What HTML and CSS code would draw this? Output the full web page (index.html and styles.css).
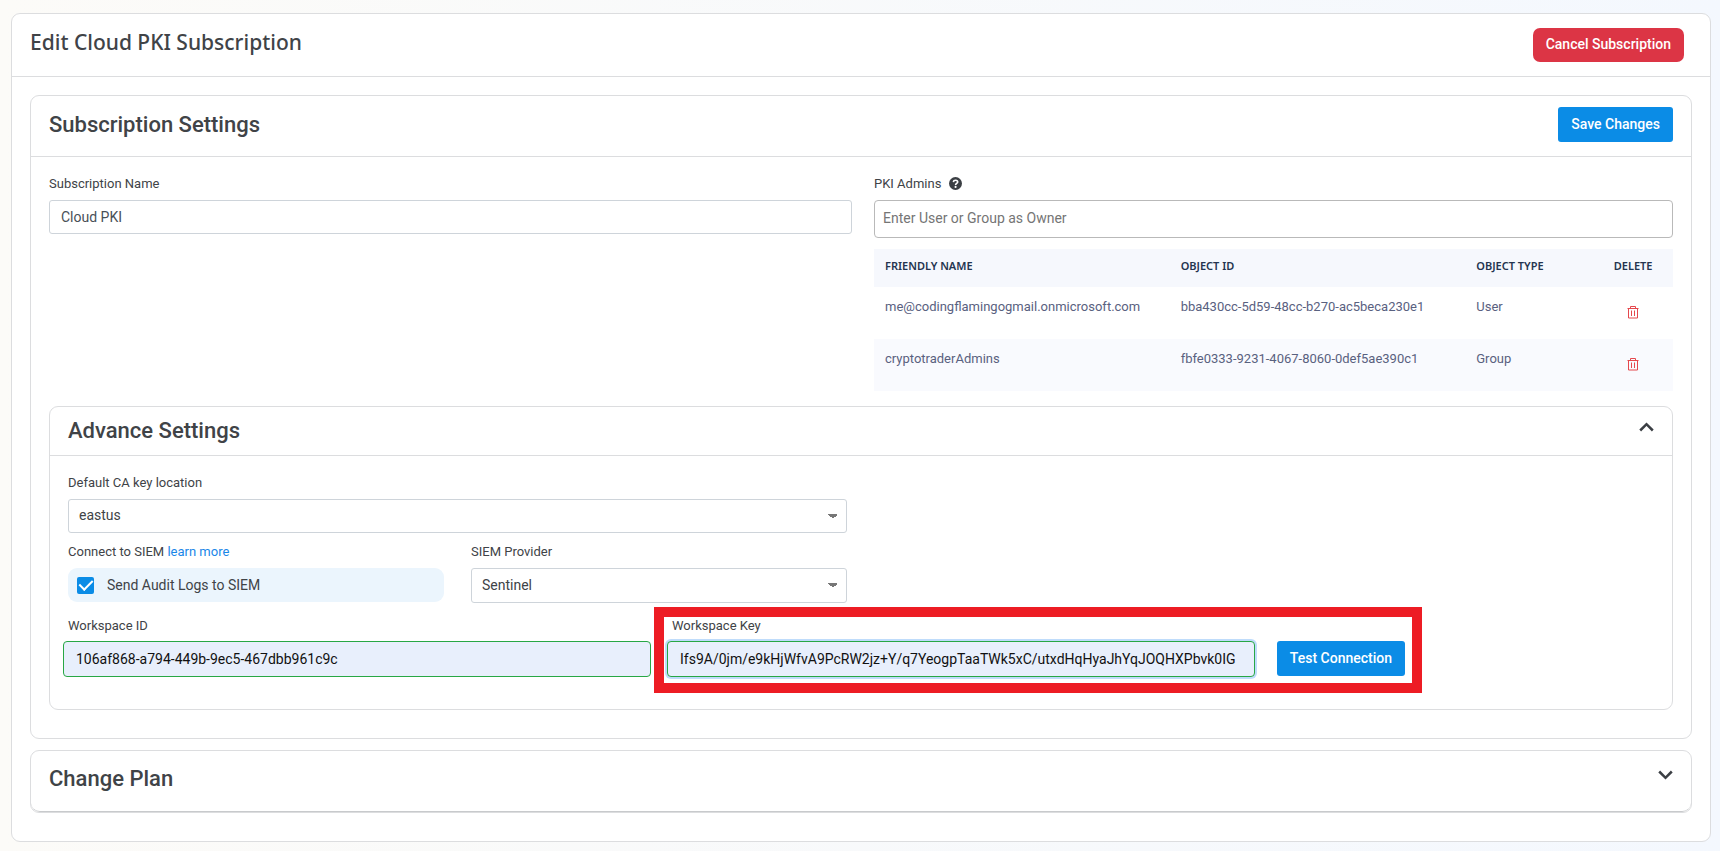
FILE: index.html
```html
<!DOCTYPE html>
<html lang="en">
<head>
<meta charset="utf-8">
<title>Edit Cloud PKI Subscription</title>
<link rel="stylesheet" href="styles.css">
</head>
<body>
<main class="card page-card">
  <header class="page-header">
    <h1 class="page-title">Edit Cloud PKI Subscription</h1>
    <button type="button" class="btn btn-danger">Cancel Subscription</button>
  </header>
  <div class="page-body">
    <section class="card">
      <header class="section-header">
        <h2 class="section-title">Subscription Settings</h2>
        <button type="button" class="btn btn-primary">Save Changes</button>
      </header>
      <div class="section-body">
        <div class="settings-grid">
          <div class="field">
            <label class="label" for="sub-name">Subscription Name</label>
            <input class="control" id="sub-name" type="text" value="Cloud PKI">
          </div>
          <div class="field">
            <label class="label" for="admins">PKI Admins
              <svg class="help" viewBox="0 0 16 16" width="13" height="13" aria-hidden="true"><circle cx="8" cy="8" r="8" fill="#3b3f44"/><path d="M5.3 6.200C5.500 4.700 6.500 4 8 4C9.600 4 10.700 4.900 10.700 6.200C10.700 7.900 8.100 7.900 8.100 9.800" fill="none" stroke="#fff" stroke-width="2"/><circle cx="8.100" cy="12.200" r="1.300" fill="#fff"/></svg>
            </label>
            <input class="control control-picker" id="admins" type="text" placeholder="Enter User or Group as Owner">
            <table class="admins">
              <thead>
                <tr><th class="col-name">Friendly Name</th><th class="col-id">Object ID</th><th>Object Type</th><th class="col-delete">Delete</th></tr>
              </thead>
              <tbody>
                <tr>
                  <td>me@codingflamingogmail.onmicrosoft.com</td><td>bba430cc-5d59-48cc-b270-ac5beca230e1</td><td>User</td>
                  <td class="col-delete"><button type="button" class="icon-btn" aria-label="Delete user"><svg viewBox="0 0 12 14" width="12" height="14" fill="none" stroke="#e5484d"><path d="M.5 3.500h11M3.500 3V1.500h5V3M1.500 3.500v9.500h9V3.500M4.500 5.500v5.500M7.500 5.500v5.500"/></svg></button></td>
                </tr>
                <tr>
                  <td>cryptotraderAdmins</td><td>fbfe0333-9231-4067-8060-0def5ae390c1</td><td>Group</td>
                  <td class="col-delete"><button type="button" class="icon-btn" aria-label="Delete group"><svg viewBox="0 0 12 14" width="12" height="14" fill="none" stroke="#e5484d"><path d="M.5 3.500h11M3.500 3V1.500h5V3M1.500 3.500v9.500h9V3.500M4.500 5.500v5.500M7.500 5.500v5.500"/></svg></button></td>
                </tr>
              </tbody>
            </table>
          </div>
        </div>

        <section class="card advance">
          <header class="advance-header">
            <h2 class="section-title">Advance Settings</h2>
            <button type="button" class="icon-btn toggle" aria-label="Collapse advance settings"><svg viewBox="0 0 15 10" width="15" height="10" fill="none" stroke="#3b3f44" stroke-width="2.500"><path d="M1.200 8.500 7.500 2.200l6.300 6.300"/></svg></button>
          </header>
          <div class="advance-grid">
            <div class="field">
              <label class="label" for="location">Default CA key location</label>
              <select class="control select" id="location"><option>eastus</option></select>
            </div>
          </div>
          <div class="advance-grid">
            <div class="siem-grid">
              <div class="field">
                <p class="label">Connect to SIEM <a class="link" href="#">learn more</a></p>
                <label class="check"><input class="check-input" type="checkbox" checked>Send Audit Logs to SIEM</label>
              </div>
              <div class="field">
                <label class="label" for="provider">SIEM Provider</label>
                <select class="control select select-tall" id="provider"><option>Sentinel</option></select>
              </div>
            </div>
          </div>
          <div class="workspace">
            <div class="field">
              <label class="label label-inset" for="ws-id">Workspace ID</label>
              <input class="control control-valid" id="ws-id" type="text" value="106af868-a794-449b-9ec5-467dbb961c9c">
            </div>
            <div class="key-group">
              <div class="field key-field">
                <label class="label label-inset" for="ws-key">Workspace Key</label>
                <input class="control control-valid control-active" id="ws-key" type="text" value="Ifs9A/0jm/e9kHjWfvA9PcRW2jz+Y/q7YeogpTaaTWk5xC/utxdHqHyaJhYqJOQHXPbvk0IG">
              </div>
              <button type="button" class="btn btn-primary btn-test">Test Connection</button>
            </div>
          </div>
        </section>
      </div>
    </section>

    <section class="card">
      <header class="section-header plan-header">
        <h2 class="section-title">Change Plan</h2>
        <button type="button" class="icon-btn toggle" aria-label="Expand change plan"><svg viewBox="0 0 15 10" width="15" height="10" fill="none" stroke="#3b3f44" stroke-width="2.500"><path d="M1.200 1.500 7.500 7.800l6.300-6.300"/></svg></button>
      </header>
    </section>
  </div>
</main>
</body>
</html>
```
FILE: styles.css
```css
* {
  box-sizing: border-box;
}

body {
  margin: 0;
  padding: 13px 9px 8px 11px;
  min-height: 100vh;
  background: linear-gradient(90deg, #fcfbf8, #f4f8fe);
  color: #404347;
  font: 14px/20px Roboto, sans-serif;
}

.card {
  background: #fff;
  border: 1px solid #dcdddf;
  border-radius: 9px;
}

.page-header,
.section-header,
.advance-header {
  display: flex;
  justify-content: space-between;
  align-items: center;
  border-bottom: 1px solid #dcdddf;
}

.page-header {
  padding: 14px 26px 14px 18px;
}

.page-title {
  margin: 0 0 6px;
  font: 500 21px/28px "Noto Sans", sans-serif;
}

.page-body {
  display: grid;
  gap: 11px;
  padding: 18px 18px 28px;
}

.section-header {
  padding: 11px 18px 14px;
}

.section-title {
  margin: 0;
  font-size: 22px;
  font-weight: 500;
  line-height: 28px;
}

.section-body {
  padding: 17px 18px 28px;
}

.settings-grid {
  display: grid;
  grid-template-columns: 803fr 799fr;
  gap: 22px;
}

.field {
  min-width: 0;
}

.label {
  display: block;
  margin: 0 0 6px;
  font-size: 13px;
}

.help {
  margin-left: 4px;
  vertical-align: -2px;
}

.control {
  display: block;
  width: 100%;
  height: 34px;
  padding: 0 11px;
  border: 1px solid #ced4da;
  border-radius: 3px;
  background: #fff;
  color: #495057;
  font: 14px/20px Roboto, sans-serif;
  outline: none;
}

.control-picker {
  height: 38px;
  padding: 0 8px 2px;
  border-color: #b9b9b9;
  border-radius: 4px;
}

.control-picker::placeholder {
  color: #757575;
}

.select {
  appearance: none;
  padding: 0 10px 2px;
  color: #404347;
  background-image:
    linear-gradient(45deg, transparent 50%, #777 50%),
    linear-gradient(135deg, #777 50%, transparent 50%);
  background-position: right 13px center, right 8px center;
  background-size: 5px 5px;
  background-repeat: no-repeat;
}

.select-tall {
  height: 35px;
}

.btn {
  border: 0;
  border-radius: 3px;
  color: #fff;
  font: 500 14px/20px Roboto, sans-serif;
}

.btn-danger {
  padding: 6px 13px 8px;
  border-radius: 7px;
  background: #dc3545;
}

.btn-primary {
  height: 35px;
  padding: 0 13px 2px;
  background: #0b8ce6;
}

.icon-btn {
  display: inline-flex;
  padding: 0;
  border: 0;
  background: none;
}

.toggle {
  margin-bottom: 8px;
}

.admins {
  width: 100%;
  margin-top: 11px;
  border-spacing: 0;
  table-layout: fixed;
  color: #59617f;
  font-size: 13px;
}

.admins th {
  height: 38px;
  padding: 0 0 4px 11px;
  background: #f6f8fd;
  color: #24344f;
  font: 600 11px/20px "Noto Sans", sans-serif;
  text-align: left;
  text-transform: uppercase;
}

.admins td {
  height: 52px;
  padding: 10px 0 0 11px;
  vertical-align: top;
}

.admins tbody tr:nth-child(even) td {
  background: #f9fafe;
}

.col-name,
.col-id {
  width: 37%;
}

.col-delete {
  width: 10%;
}

.admins .col-delete {
  padding-left: 0;
  padding-right: 0;
  text-align: center;
}

.admins td.col-delete {
  padding-top: 18px;
}

.advance {
  margin-top: 15px;
  padding-bottom: 32px;
}

.advance-header {
  margin-bottom: 17px;
  padding: 10px 18px;
}

.advance-grid {
  display: grid;
  grid-template-columns: 1fr 1fr;
  gap: 28px;
  padding: 0 18px;
  margin-bottom: 9px;
}

.siem-grid {
  display: grid;
  grid-template-columns: 1fr 1fr;
  gap: 27px;
}

.link {
  color: #1a86e8;
  text-decoration: none;
}

.check {
  display: flex;
  align-items: center;
  gap: 13px;
  height: 34px;
  padding: 0 9px;
  border-radius: 9px;
  background: #ebf5fd;
}

.check-input {
  display: grid;
  place-items: center;
  appearance: none;
  width: 17px;
  height: 17px;
  margin: 0;
  border-radius: 2px;
  background: #0b8ce6;
}

.check-input:checked::after {
  content: "";
  width: 6px;
  height: 11px;
  margin-bottom: 3px;
  border: solid #fff;
  border-width: 0 2px 2px 0;
  transform: rotate(45deg);
}

.workspace {
  display: grid;
  grid-template-columns: 588fr 738fr 251fr;
  gap: 16px;
  margin-top: 13px;
  padding-left: 13px;
}

.label-inset {
  margin-bottom: 5px;
  padding-left: 5px;
}

.control-valid {
  height: 36px;
  padding: 0 12px;
  border-color: #28a745;
  border-radius: 4px;
  background: #e8effc;
  color: #111;
}

.control-active {
  box-shadow: 0 0 0 2px #bfdcfb;
}

.key-group {
  position: relative;
  display: flex;
  align-items: flex-end;
  gap: 22px;
}

.key-group::before {
  content: "";
  position: absolute;
  inset: -9px -17px -16px -13px;
  border: 10px solid #ed1c24;
  pointer-events: none;
}

.key-field {
  flex: 1;
}

.btn-test {
  margin-bottom: 1px;
}

.plan-header {
  border-bottom-color: #c8cacc;
  border-radius: 0 0 9px 9px;
  padding: 14px 18px 18px;
}
```
